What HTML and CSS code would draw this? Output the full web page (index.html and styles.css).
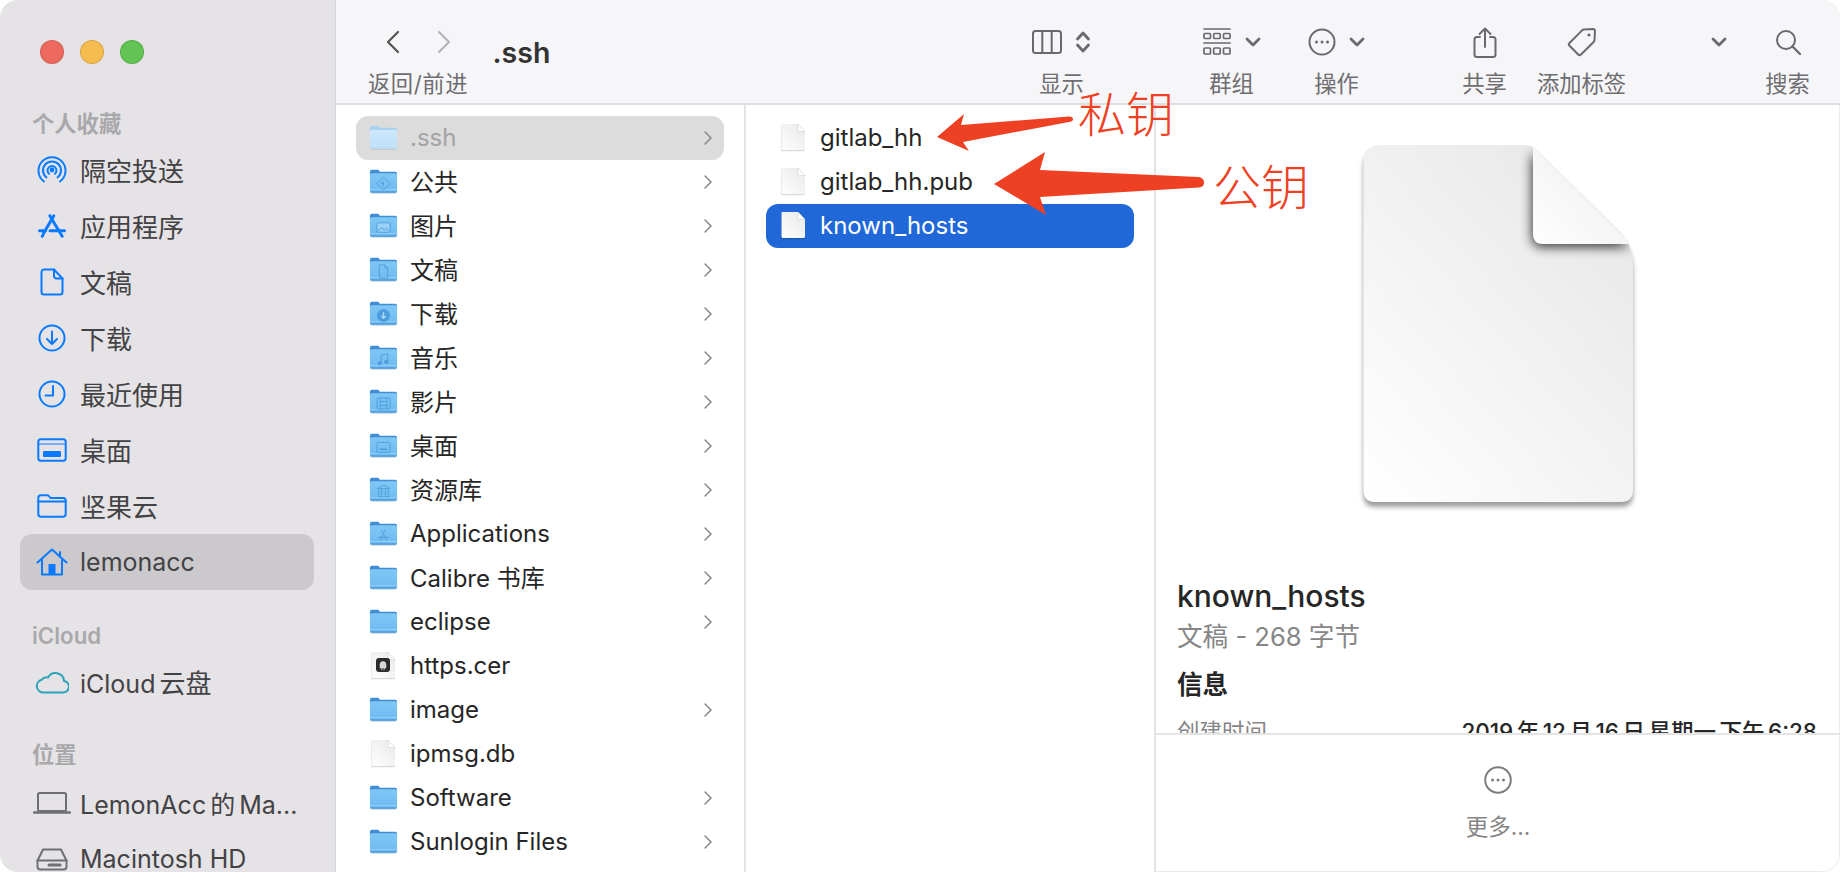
FILE: index.html
```html
<!DOCTYPE html>
<html lang="zh-CN">
<head>
<meta charset="utf-8">
<title>.ssh</title>
<link rel="stylesheet" href="styles.css">
</head>
<body>
<svg class="defs" width="0" height="0" aria-hidden="true">
  <defs>
    <linearGradient id="fb" x1="0" y1="0" x2="0" y2="1"><stop offset="0" stop-color="#80c7f5"/><stop offset="1" stop-color="#6cb9f0"/></linearGradient>
    <linearGradient id="fbd" x1="0" y1="0" x2="0" y2="1"><stop offset="0" stop-color="#cfe9fb"/><stop offset="1" stop-color="#b9def8"/></linearGradient>
    <linearGradient id="fp" x1="1" y1="0" x2="0" y2="1"><stop offset="0" stop-color="#e9e9e9"/><stop offset="1" stop-color="#fefefe"/></linearGradient>
    <linearGradient id="bigp" x1="0.85" y1="0.1" x2="0.1" y2="1"><stop offset="0" stop-color="#e8e8e8"/><stop offset="1" stop-color="#fefefe"/></linearGradient>
    <linearGradient id="bigf" x1="0" y1="1" x2="1" y2="0"><stop offset="0" stop-color="#ffffff"/><stop offset="0.5" stop-color="#f5f5f5"/><stop offset="0.8" stop-color="#dedede"/><stop offset="1" stop-color="#d4d4d4"/></linearGradient>
    <filter id="blurFold" x="-40%" y="-40%" width="180%" height="180%"><feGaussianBlur stdDeviation="6"/></filter>
    <filter id="blurPage" x="-10%" y="-10%" width="120%" height="120%"><feGaussianBlur stdDeviation="2.5"/></filter>
    <clipPath id="pageClip"><path d="M27 10H171Q180 10 184 15L270 100Q280 113 280 130V355Q280 367 268 367H22Q10.500 367 10.500 355V27Q10.500 10 27 10z"/></clipPath>
    <symbol id="folder" viewBox="0 0 31 29">
      <rect x="1.500" y="5" width="28" height="22.800" rx="2" fill="#000" opacity=".13"/>
      <path d="M1 4.500C1 3 1.800 2 3 2h6c1 0 1.400.500 2 1.200l.7.800H28c1.200 0 2 .800 2 2v3H1z" fill="#3f8dd4"/>
      <rect x="1" y="5.800" width="29" height="20.700" rx="1.800" fill="url(#fb)"/>
      <rect x="1" y="22.800" width="29" height=".7" fill="#a5d8f7"/>
      <path d="M1 25h29c0 1-.8 1.500-1.800 1.500H2.800C1.800 26.500 1 26 1 25z" fill="#4f9fdf"/>
    </symbol>
    <symbol id="folder-dim" viewBox="0 0 31 29">
      <rect x="1.500" y="5" width="28" height="22.500" rx="2" fill="#000" opacity=".1"/>
      <path d="M1 4.500C1 3 1.800 2 3 2h6c1 0 1.400.500 2 1.200l.7.800H28c1.200 0 2 .800 2 2v4H1z" fill="#a9d3ef"/>
      <rect x="1" y="6.500" width="29" height="20" rx="1.800" fill="url(#fbd)"/>
      <rect x="1" y="23" width="29" height=".8" fill="#d7eefc"/>
    </symbol>
    <symbol id="page" viewBox="0 0 29 29">
      <path d="M3 1.500h16l7 7.500v17a1.500 1.500 0 0 1-1.500 1.500h-21A1.500 1.500 0 0 1 2 26V2.500a1 1 0 0 1 1-1z" fill="#000" opacity=".14" transform="translate(0 .7)"/>
      <path d="M3.500 1h15.500l7 7.500V25.500a1.500 1.500 0 0 1-1.500 1.500h-21A1.500 1.500 0 0 1 2.500 25.500V2a1 1 0 0 1 1-1z" fill="url(#fp)"/>
      <path d="M19 1l7 7.500h-6a1 1 0 0 1-1-1z" fill="#fff" stroke="#cfcfcf" stroke-width=".6"/>
    </symbol>
    <symbol id="chev" viewBox="0 0 10 16"><path d="M2 2l6 6-6 6" fill="none" stroke="#8b8b8b" stroke-width="1.600" stroke-linecap="round" stroke-linejoin="round"/></symbol>
  </defs>
</svg>

<div class="window">
  <aside class="sidebar">
    <div class="lights"><span class="dot red"></span><span class="dot yellow"></span><span class="dot green"></span></div>
    <div class="heading">个人收藏</div>
    <div class="side-row cjk"><span class="side-icon"><svg width="30" height="30" viewBox="0 0 30 30" class="ic-blue"><path d="M7 26.500A13.500 13.500 0 1 1 23 26.500"/><path d="M9.500 22.500a9 9 0 1 1 11 0"/><path d="M12 18.800a4.500 4.500 0 1 1 6 0"/><circle cx="15" cy="15" r="1.400" class="fill"/></svg></span><span>隔空投送</span></div>
    <div class="side-row cjk"><span class="side-icon"><svg width="28" height="26" viewBox="0 0 28 26" class="ic-blue thick"><path d="M15.800 2.700L5.500 20.500"/><path d="M11.800 2.700L24.200 23.300"/><path d="M1.500 17.700h6M12 17.700h14.500"/><path d="M5 22l-.8 1.300"/></svg></span><span>应用程序</span></div>
    <div class="side-row cjk"><span class="side-icon"><svg width="24" height="28" viewBox="0 0 24 28" class="ic-blue"><path d="M4 1.500h10l8.500 9V24a2.500 2.500 0 0 1-2.500 2.500H4A2.500 2.500 0 0 1 1.500 24V4A2.500 2.500 0 0 1 4 1.500z"/><path d="M14 1.500V8a2.500 2.500 0 0 0 2.500 2.500h6"/></svg></span><span>文稿</span></div>
    <div class="side-row cjk"><span class="side-icon"><svg width="28" height="28" viewBox="0 0 28 28" class="ic-blue"><circle cx="14" cy="14" r="12.500"/><path d="M14 7.500v12M9 15l5 5 5-5"/></svg></span><span>下载</span></div>
    <div class="side-row cjk"><span class="side-icon"><svg width="28" height="28" viewBox="0 0 28 28" class="ic-blue"><circle cx="14" cy="14" r="12.500"/><path d="M15 6v9.500H7.500"/></svg></span><span>最近使用</span></div>
    <div class="side-row cjk"><span class="side-icon"><svg width="30" height="24" viewBox="0 0 30 24" class="ic-blue"><rect x="1.300" y="1.300" width="27.400" height="21.400" rx="2.500"/><path d="M1.300 6h27.400" stroke-width="1"/><rect x="7" y="14" width="16" height="4" class="fill"/></svg></span><span>桌面</span></div>
    <div class="side-row cjk"><span class="side-icon"><svg width="30" height="24" viewBox="0 0 30 24" class="ic-blue"><path d="M1.300 4c0-1.500 1-2.700 2.500-2.700h6.500c1 0 1.500.500 2 1.200l1 1.500H26c1.500 0 2.700 1 2.700 2.500V20c0 1.500-1.200 2.700-2.700 2.700H4c-1.500 0-2.700-1.200-2.700-2.700z"/><path d="M1.300 7.500h27.400"/></svg></span><span>坚果云</span></div>
    <div class="side-row active"><span class="side-icon"><svg width="32" height="28" viewBox="0 0 32 28" class="ic-blue"><path d="M1.500 14.500L16 1.500l14.500 13"/><path d="M24 4v5"/><path d="M6 11.500V26.500h20V11.500"/><rect x="12.500" y="16" width="7" height="10.500" class="fill" stroke="none"/></svg></span><span>lemonacc</span></div>
    <div class="heading h2">iCloud</div>
    <div class="side-row"><span class="side-icon"><svg width="34" height="24" viewBox="0 0 34 24" class="ic-teal"><path d="M8 22.500A6.500 6.500 0 0 1 6.800 9.700 6 6 0 0 1 13 7.500 8.500 8.500 0 0 1 29 11a5.800 5.800 0 0 1-1.500 11.500z"/></svg></span><span>iCloud<span class="han big">云盘</span></span></div>
    <div class="heading h3">位置</div>
    <div class="side-row"><span class="side-icon"><svg width="38" height="24" viewBox="0 0 38 24" class="ic-gray"><rect x="5" y="2" width="28" height="18" rx="1.500"/><path d="M1 21.500h36" stroke-width="2.500"/></svg></span><span>LemonAcc<span class="han">的</span><span class="han">Ma...</span></span></div>
    <div class="side-row"><span class="side-icon"><svg width="32" height="24" viewBox="0 0 32 24" class="ic-gray"><path d="M7 2.500h18l5.500 11v6a3 3 0 0 1-3 3h-23a3 3 0 0 1-3-3v-6z"/><path d="M1.500 13.500h29"/><path d="M13 18h11" stroke-width="3" stroke-dasharray="1 1"/></svg></span><span>Macintosh HD</span></div>
  </aside>

  <main class="main">
    <header class="toolbar">
      <div class="tool nav">
        <div class="tool-icons nav-icons">
          <svg width="14" height="24" viewBox="0 0 14 24" class="ic-dark"><path d="M12 2L2 12l10 10"/></svg>
          <svg width="14" height="24" viewBox="0 0 14 24" class="ic-light"><path d="M2 2l10 10L2 22"/></svg>
        </div>
        <div class="tool-label wide">返回/前进</div>
      </div>
      <div class="title">.ssh</div>
      <div class="tool t-view">
        <div class="tool-icons">
          <svg width="30" height="24" viewBox="0 0 30 24" class="ic-tool"><rect x="1" y="1" width="28" height="22" rx="2.500"/><path d="M10.300 1v22M19.700 1v22"/></svg>
          <svg width="16" height="24" viewBox="0 0 16 24" class="ic-tool bold"><path d="M2.500 9L8 3l5.500 6M2.500 15L8 21l5.500-6"/></svg>
        </div>
        <div class="tool-label">显示</div>
      </div>
      <div class="tool t-group">
        <div class="tool-icons">
          <svg width="30" height="28" viewBox="0 0 30 28" class="ic-tool thin"><path d="M2 1h26M2 15h26"/><rect x="2" y="5.500" width="6.500" height="5" rx="1"/><rect x="11.700" y="5.500" width="6.500" height="5" rx="1"/><rect x="21.500" y="5.500" width="6.500" height="5" rx="1"/><rect x="2" y="20" width="6.500" height="6" rx="1"/><rect x="11.700" y="20" width="6.500" height="6" rx="1"/><rect x="21.500" y="20" width="6.500" height="6" rx="1"/></svg>
          <svg width="16" height="12" viewBox="0 0 16 12" class="ic-tool bold"><path d="M2 3l6 6 6-6"/></svg>
        </div>
        <div class="tool-label">群组</div>
      </div>
      <div class="tool t-action">
        <div class="tool-icons">
          <svg width="28" height="28" viewBox="0 0 28 28" class="ic-tool"><circle cx="14" cy="14" r="12.500"/><circle cx="8.500" cy="14" r="1.500" class="fill"/><circle cx="14" cy="14" r="1.500" class="fill"/><circle cx="19.500" cy="14" r="1.500" class="fill"/></svg>
          <svg width="16" height="12" viewBox="0 0 16 12" class="ic-tool bold"><path d="M2 3l6 6 6-6"/></svg>
        </div>
        <div class="tool-label">操作</div>
      </div>
      <div class="tool t-share">
        <div class="tool-icons">
          <svg width="24" height="31" viewBox="0 0 24 31" class="ic-tool"><path d="M7 10H4a2.500 2.500 0 0 0-2.500 2.500v15A2.500 2.500 0 0 0 4 30h16a2.500 2.500 0 0 0 2.500-2.500v-15A2.500 2.500 0 0 0 20 10h-3"/><path d="M12 20V2M6.500 7L12 1.500 17.500 7"/></svg>
        </div>
        <div class="tool-label">共享</div>
      </div>
      <div class="tool t-tag">
        <div class="tool-icons">
          <svg width="30" height="30" viewBox="0 0 30 30" class="ic-tool"><path d="M17 2.500l9-.5a2 2 0 0 1 2 2l-.5 9a3 3 0 0 1-.9 2L14 27.500a2 2 0 0 1-2.800 0L2.500 18.800a2 2 0 0 1 0-2.800L15 3.400a3 3 0 0 1 2-.9z"/><circle cx="22" cy="8" r="1.600" class="fill"/></svg>
        </div>
        <div class="tool-label">添加标签</div>
      </div>
      <div class="tool t-more">
        <div class="tool-icons">
          <svg width="16" height="12" viewBox="0 0 16 12" class="ic-tool bold"><path d="M2 3l6 6 6-6"/></svg>
        </div>
      </div>
      <div class="tool t-search">
        <div class="tool-icons">
          <svg width="26" height="26" viewBox="0 0 26 26" class="ic-tool"><circle cx="11" cy="11" r="9"/><path d="M17.500 17.500L25 25" stroke-width="2.400"/></svg>
        </div>
        <div class="tool-label">搜索</div>
      </div>
    </header>

    <section class="browser">
      <div class="col">
        <div class="row dim-sel"><svg class="thumb"><use href="#folder-dim"/></svg><span class="name dim">.ssh</span><svg class="chev"><use href="#chev"/></svg></div>
        <div class="row"><span class="thumb-wrap"><svg class="thumb"><use href="#folder"/></svg><svg class="glyph" viewBox="0 0 16 16"><path d="M8 1l7 7-7 7-7-7zM8.500 5L6 8h2.500M8 8v3"/></svg></span><span class="name up">公共</span><svg class="chev"><use href="#chev"/></svg></div>
        <div class="row"><span class="thumb-wrap"><svg class="thumb"><use href="#folder"/></svg><svg class="glyph solid" viewBox="0 0 16 16"><rect x="1" y="3" width="14" height="10" rx="1"/><path d="M2 12l4-4 3 3 2-2 3 3" /></svg></span><span class="name up">图片</span><svg class="chev"><use href="#chev"/></svg></div>
        <div class="row"><span class="thumb-wrap"><svg class="thumb"><use href="#folder"/></svg><svg class="glyph" viewBox="0 0 16 16"><path d="M3.500 1h6l3 3.500V15h-9zM9.500 1v3.500h3"/></svg></span><span class="name up">文稿</span><svg class="chev"><use href="#chev"/></svg></div>
        <div class="row"><span class="thumb-wrap"><svg class="thumb"><use href="#folder"/></svg><svg class="glyph filled" viewBox="0 0 16 16"><circle cx="8" cy="8" r="6.500"/><path d="M8 4.500v6M5.500 8.500L8 11l2.500-2.500" class="cut"/></svg></span><span class="name up">下载</span><svg class="chev"><use href="#chev"/></svg></div>
        <div class="row"><span class="thumb-wrap"><svg class="thumb"><use href="#folder"/></svg><svg class="glyph filled" viewBox="0 0 16 16"><path d="M5.500 12V3.500l7-1.500v8.500" fill="none"/><circle cx="4" cy="12" r="1.800"/><circle cx="11" cy="10.500" r="1.800"/></svg></span><span class="name up">音乐</span><svg class="chev"><use href="#chev"/></svg></div>
        <div class="row"><span class="thumb-wrap"><svg class="thumb"><use href="#folder"/></svg><svg class="glyph" viewBox="0 0 16 16"><rect x="1" y="2" width="14" height="12" rx="1"/><path d="M4.500 2v12M11.500 2v12M4.500 6h7M4.500 10h7"/></svg></span><span class="name up">影片</span><svg class="chev"><use href="#chev"/></svg></div>
        <div class="row"><span class="thumb-wrap"><svg class="thumb"><use href="#folder"/></svg><svg class="glyph" viewBox="0 0 16 16"><rect x="1" y="2.500" width="14" height="11" rx="1"/><path d="M4 10h8" stroke-width="1.600"/></svg></span><span class="name up">桌面</span><svg class="chev"><use href="#chev"/></svg></div>
        <div class="row"><span class="thumb-wrap"><svg class="thumb"><use href="#folder"/></svg><svg class="glyph" viewBox="0 0 16 16"><path d="M8 1L1.500 5h13zM3 6v6M6 6v6M10 6v6M13 6v6M1.500 13.500h13"/></svg></span><span class="name up">资源库</span><svg class="chev"><use href="#chev"/></svg></div>
        <div class="row"><span class="thumb-wrap"><svg class="thumb"><use href="#folder"/></svg><svg class="glyph" viewBox="0 0 16 16"><path d="M6 2l5.500 11M10 2L4.500 13M2 10h12"/></svg></span><span class="name">Applications</span><svg class="chev"><use href="#chev"/></svg></div>
        <div class="row"><svg class="thumb"><use href="#folder"/></svg><span class="name up">Calibre 书库</span><svg class="chev"><use href="#chev"/></svg></div>
        <div class="row"><svg class="thumb"><use href="#folder"/></svg><span class="name">eclipse</span><svg class="chev"><use href="#chev"/></svg></div>
        <div class="row"><span class="thumb-wrap"><svg class="thumb"><use href="#page"/></svg><svg class="cert" viewBox="0 0 14 14"><rect width="14" height="14" rx="3" fill="#2b2b2b"/><path d="M7 3.500a3 3 0 0 1 3 3V10H4V6.500a3 3 0 0 1 3-3zM5.500 10v2M8.500 10v2M7 10v2.500" fill="#d8d8d8" stroke="#d8d8d8" stroke-width=".6"/></svg></span><span class="name">https.cer</span></div>
        <div class="row"><svg class="thumb"><use href="#folder"/></svg><span class="name">image</span><svg class="chev"><use href="#chev"/></svg></div>
        <div class="row"><svg class="thumb"><use href="#page"/></svg><span class="name">ipmsg.db</span></div>
        <div class="row"><svg class="thumb"><use href="#folder"/></svg><span class="name">Software</span><svg class="chev"><use href="#chev"/></svg></div>
        <div class="row"><svg class="thumb"><use href="#folder"/></svg><span class="name">Sunlogin Files</span><svg class="chev"><use href="#chev"/></svg></div>
      </div>

      <div class="col">
        <div class="row"><svg class="thumb"><use href="#page"/></svg><span class="name">gitlab_hh</span></div>
        <div class="row"><svg class="thumb"><use href="#page"/></svg><span class="name">gitlab_hh.pub</span></div>
        <div class="row blue-sel"><svg class="thumb"><use href="#page"/></svg><span class="name">known_hosts</span></div>
      </div>

      <div class="preview">
        <div class="preview-top">
          <svg class="big-file" width="290" height="380" viewBox="0 0 290 380">
            <path d="M27 11H171Q180 11 184 16L270 101Q280 114 280 131V355Q280 367 268 367H22Q10.500 367 10.500 355V27Q10.500 11 27 11z" fill="#000" opacity=".38" filter="url(#blurPage)" transform="translate(0 5)"/>
            <path d="M27 10H171Q180 10 184 15L270 100Q280 113 280 130V355Q280 367 268 367H22Q10.500 367 10.500 355V27Q10.500 10 27 10z" fill="url(#bigp)"/>
            <g clip-path="url(#pageClip)"><path d="M180 14L270 100Q275 105 277 109H190Q180 109 180 99z" fill="#000" opacity=".78" filter="url(#blurFold)" transform="translate(-1 3)"/></g>
            <path d="M180 11Q182 12 184 15L270 100Q275 105 277 109H190Q180 109 180 99z" fill="url(#bigf)"/>
          </svg>
          <div class="fname">known_hosts</div>
          <div class="fmeta">文稿 - 268 字节</div>
          <div class="finfo">信息</div>
          <div class="fline"><span class="flabel">创建时间</span><span class="fdate">2019 年 12 月 16 日 星期一 下午 6:28</span></div>
        </div>
        <div class="preview-more">
          <svg width="28" height="28" viewBox="0 0 28 28" class="ic-more"><circle cx="14" cy="14" r="12.800"/><circle cx="8.500" cy="14" r="1.500" class="fill"/><circle cx="14" cy="14" r="1.500" class="fill"/><circle cx="19.500" cy="14" r="1.500" class="fill"/></svg>
          <span>更多...</span>
        </div>
      </div>
    </section>
  </main>

  <svg class="arrows" width="1840" height="872" viewBox="0 0 1840 872" aria-hidden="true">
    <path d="M937 137L964 114L961 125L1069 116.500Q1073 116.500 1073 119Q1073 121.500 1069 122L963 142L969 151z" fill="#ee4023"/>
    <path d="M994 184L1045 152L1040 170L1199 177Q1204 178 1204 182.500Q1204 187 1199 187.500L1040 197L1046 215z" fill="#ee4023"/>
  </svg>
  <div class="note note-a">私钥</div>
  <div class="note note-b">公钥</div>
</div>
</body>
</html>
```
FILE: styles.css
```css
* { box-sizing: border-box; }
html, body {
  margin: 0;
  height: 100%;
  background: #fff;
  overflow: hidden;
}
body {
  font-family: Inter, "Noto Sans CJK SC", sans-serif;
  color: #262626;
}
.defs { position: absolute; }

.window {
  position: relative;
  width: 1840px;
  height: 872px;
  display: flex;
  overflow: hidden;
  border-radius: 18px;
  box-shadow: inset 0 0 0 1px rgba(0, 0, 0, .08);
  background: #fff;
}

/* sidebar */
.sidebar {
  width: 336px;
  flex: none;
  background: #e5e3e6;
  border-right: 1px solid #d6d5d7;
  padding-top: 40px;
  overflow: hidden;
  border-radius: 18px 0 0 18px;
}
.lights { display: flex; gap: 16px; padding-left: 40px; height: 24px; margin-bottom: 46px; }
.dot { width: 24px; height: 24px; border-radius: 50%; border: 1px solid rgba(0, 0, 0, .12); }
.red { background: #ee6a5f; }
.yellow { background: #f5bd4f; }
.green { background: #61c454; }
.heading {
  height: 28px;
  line-height: 28px;
  padding-left: 32px;
  font-size: 22.300px;
  font-weight: 600;
  color: #a9a8ab;
  margin-bottom: 4px;
}
.h2 { margin-top: 32px; }
.h3 { margin-top: 31px; margin-bottom: 6px; }
.side-row {
  height: 56px;
  margin: 0 21px 0 20px;
  padding: 0 0 1px 12px;
  display: flex;
  align-items: center;
  gap: 8px;
  font-size: 25px;
  color: #434244;
  border-radius: 12px;
  white-space: nowrap;
}
.side-row.cjk { font-size: 26px; }
.han { margin-left: 4px; }
.han.big { font-size: 26px; }
.side-row.active { background: #cbc9cc; }
.side-icon { width: 40px; flex: none; display: flex; justify-content: center; align-items: center; }
.ic-blue, .ic-teal, .ic-gray, .ic-dark, .ic-light, .ic-tool, .ic-more {
  fill: none;
  stroke-width: 2;
  stroke-linecap: round;
  stroke-linejoin: round;
  display: block;
}
.ic-blue { stroke: #0a7bff; }
.ic-blue .fill { fill: #0a7bff; }
.ic-blue.thick { stroke-width: 3; }
.ic-teal { stroke: #2aa3b8; }
.ic-gray { stroke: #6f6e70; }
.ic-dark { stroke: #555; stroke-width: 2.200; }
.ic-light { stroke: #b5b5b7; stroke-width: 2.200; }
.ic-tool { stroke: #6a696c; }
.ic-tool .fill { fill: #6a696c; stroke: none; }
.ic-tool.bold { stroke-width: 2.800; }
.ic-tool.thin { stroke-width: 1.700; }
.ic-more { stroke: #7d7d7d; }
.ic-more .fill { fill: #7d7d7d; stroke: none; }

/* toolbar */
.main { flex: 1; min-width: 0; display: flex; flex-direction: column; }
.toolbar {
  height: 105px;
  flex: none;
  display: flex;
  background: #f6f5f8;
  border-bottom: 2px solid #dedde0;
  padding-left: 30px;
  position: relative;
}
.tool { display: flex; flex-direction: column; align-items: center; padding-top: 26px; flex: none; }
.tool-icons { height: 32px; display: flex; align-items: center; gap: 13px; }
.tool-label { font-size: 22.300px; line-height: 30px; margin-top: 11px; color: #6e6d70; white-space: nowrap; }
.tool-label.wide { letter-spacing: .6px; }
.nav { width: 104px; }
.nav-icons { gap: 37px; }
.title {
  font-size: 28.500px;
  font-weight: 600;
  color: #333;
  line-height: 36px;
  margin: 35px 0 0 22.500px;
  flex: none;
  width: 524px;
}
.t-view { width: 90px; }
.t-group { width: 90px; margin-left: 80px; }
.t-action { width: 90px; margin-left: 15px; }
.t-share { width: 60px; margin-left: 73px; }
.t-tag { width: 90px; margin-left: 22px; }
.t-more { width: 20px; margin-left: 82px; }
.t-search { width: 50px; margin-left: 34px; }

/* browser columns */
.browser { flex: 1; min-height: 0; display: flex; }
.col {
  width: 410px;
  flex: none;
  padding-top: 11px;
  border-right: 2px solid #e4e4e4;
  background: #fff;
  overflow: hidden;
}
.row {
  height: 44px;
  margin: 0 20px;
  padding: 0 11px 1px 13px;
  display: flex;
  align-items: center;
  gap: 12px;
  font-size: 24px;
  color: #262626;
  border-radius: 12px;
  white-space: nowrap;
}
.thumb { width: 29px; height: 29px; flex: none; display: block; }
.thumb-wrap { position: relative; width: 29px; height: 29px; flex: none; }
.glyph {
  position: absolute;
  left: 7px;
  top: 9px;
  width: 15px;
  height: 15px;
  fill: none;
  stroke: #3f92d6;
  stroke-width: 1;
  opacity: .75;
}
.glyph.solid { fill: #a6d8f7; }
.glyph.filled { fill: #3f92d6; }
.glyph .cut { stroke: #bfe3fa; stroke-width: 1.400; fill: none; }
.cert { position: absolute; left: 7px; top: 7px; width: 14px; height: 14px; }
.name { flex: 1; min-width: 0; }
.name.up { margin-bottom: 3px; }
.name.dim { color: #a3a3a3; }
.chev { width: 10px; height: 16px; flex: none; }
.dim-sel { background: #dcdcdc; }
.blue-sel { background: #2068d8; }
.blue-sel .name { color: #fff; }

/* preview */
.preview { flex: 1; min-width: 0; display: flex; flex-direction: column; }
.preview-top { height: 628px; flex: none; padding: 0 23px 0 21px; overflow: hidden; }
.big-file { display: block; margin: 30px 0 0 176px; }
.fname { font-size: 30px; font-weight: 500; line-height: 34px; margin-top: 64px; color: #262626; }
.fmeta { font-size: 25.600px; line-height: 34px; margin-top: 7px; color: #868686; }
.finfo { font-size: 25.600px; font-weight: 700; line-height: 34px; margin-top: 14px; color: #262626; }
.fline { display: flex; justify-content: space-between; font-size: 22.500px; line-height: 30px; margin-top: 15px; }
.flabel { color: #868686; }
.fdate { color: #262626; font-weight: 500; word-spacing: -2.500px; }
.preview-more {
  flex: 1;
  border-top: 2px solid #e4e4e4;
  display: flex;
  flex-direction: column;
  align-items: center;
  padding-top: 31px;
  gap: 18px;
  font-size: 22.500px;
  line-height: 30px;
  color: #858585;
}

/* annotations sit over the screenshot */
.arrows { position: absolute; left: 0; top: 0; pointer-events: none; }
.note {
  position: absolute;
  font-family: "Noto Sans CJK SC", sans-serif;
  font-weight: 300;
  font-size: 48px;
  line-height: 46px;
  color: #ee4023;
  white-space: nowrap;
}
.note-a { left: 1078px; top: 88px; }
.note-b { left: 1213px; top: 161px; }
```
